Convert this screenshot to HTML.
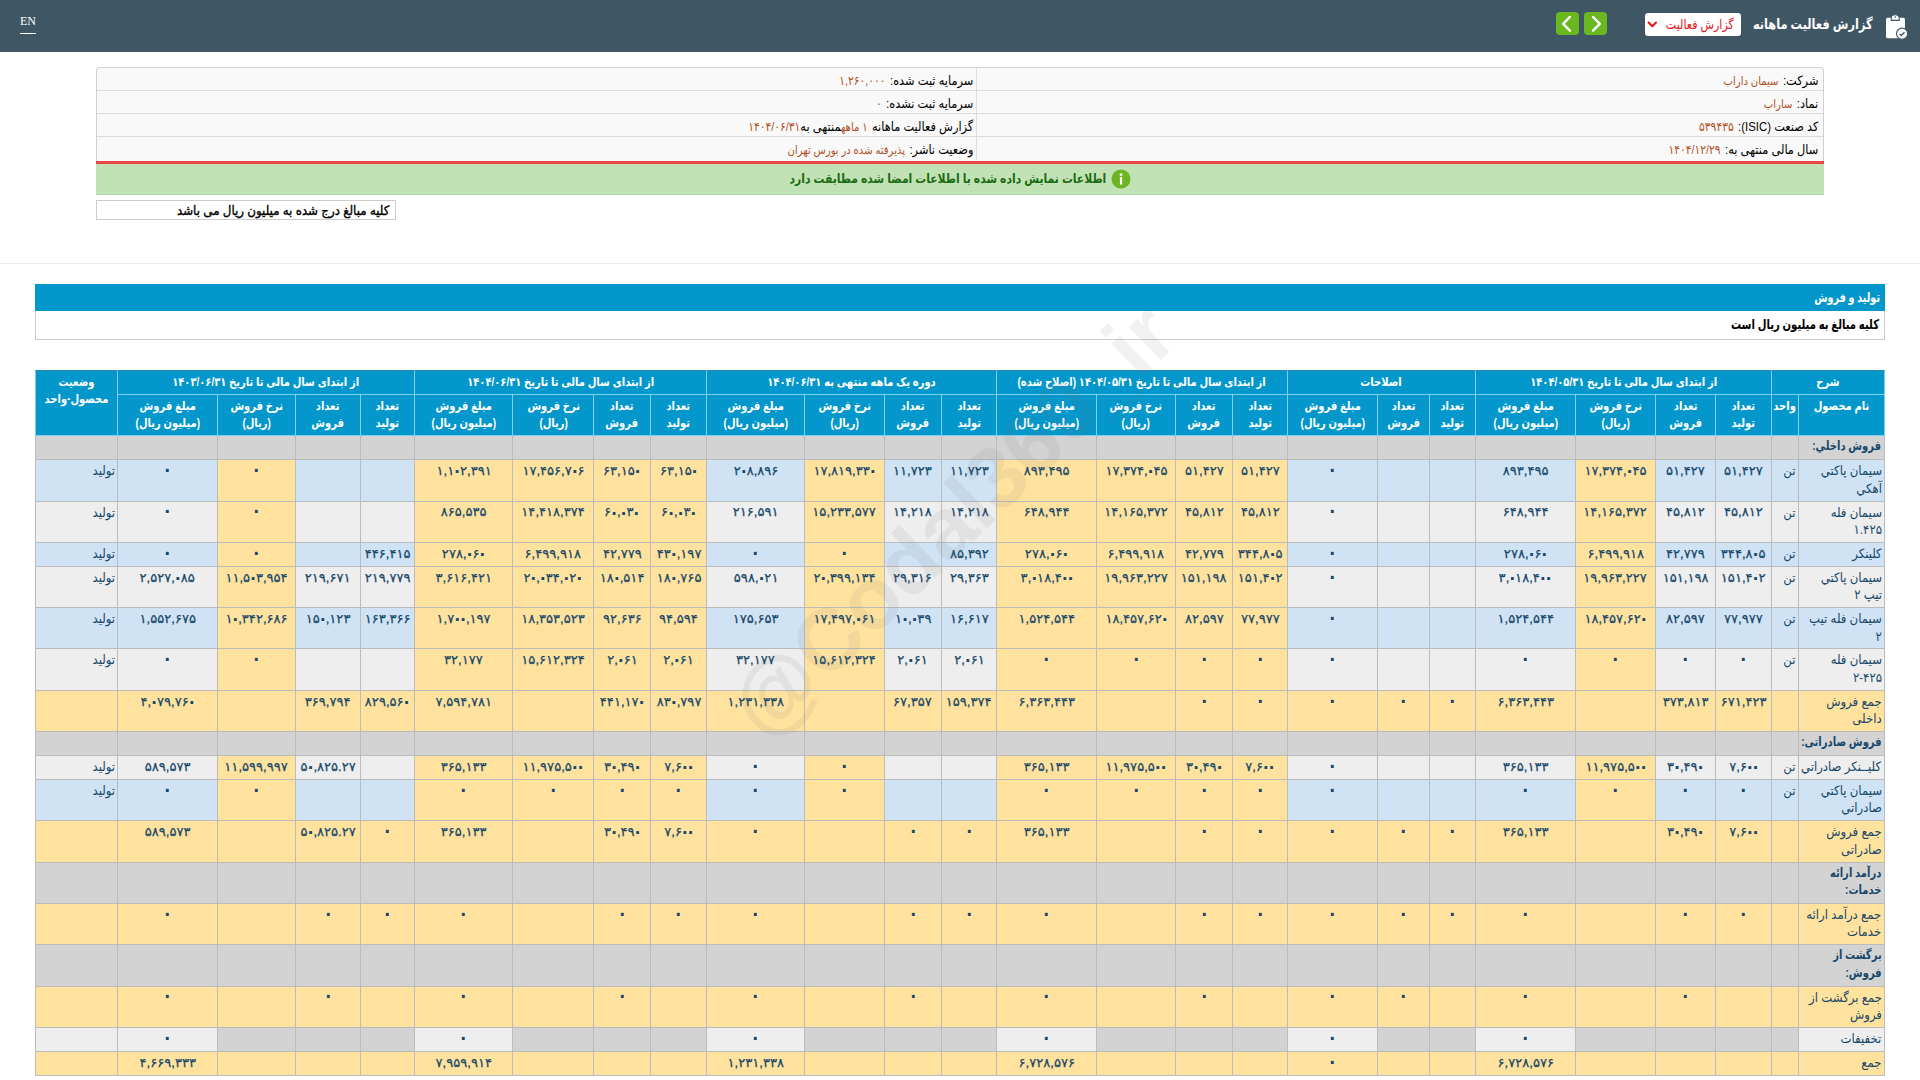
<!DOCTYPE html>
<html lang="fa">
<head>
<meta charset="utf-8">
<title>گزارش فعالیت ماهانه</title>
<style>
html,body{margin:0;padding:0;}
body{width:1920px;height:1080px;overflow:hidden;background:#fff;position:relative;
 font-family:"Liberation Sans","DejaVu Sans",sans-serif;font-size:12px;color:#000;}
.abs{position:absolute;}
/* top bar */
#top{left:0;top:0;width:1920px;height:52px;background:#3f5765;}
#en{left:20px;top:14px;color:#fff;font-family:"Liberation Serif",serif;font-size:12px;line-height:14px;border-bottom:1px solid #fff;padding-bottom:5px;}
#title{right:47px;top:13px;color:#fff;font-weight:bold;font-size:14px;line-height:22px;white-space:nowrap;direction:rtl;transform:scaleX(.811);transform-origin:100% 50%;}
#sel{left:1645px;top:13px;width:96px;height:23px;background:#fff;border-radius:3px;direction:rtl;}
#sel span{position:absolute;right:7px;top:0;line-height:24px;color:#e5141b;font-size:13px;white-space:nowrap;transform:scaleX(.852);transform-origin:100% 50%;}
.gbtn{top:12px;width:23px;height:23px;background:#6ab81f;border-radius:4px;}
/* info */
#info{left:96px;top:67px;width:1726px;height:93px;border:1px solid #d0d0d0;border-bottom:none;background:#f9f9f9;border-radius:4px 4px 0 0;}
.irow{position:absolute;left:0;width:1726px;height:22px;border-bottom:1px solid #dcdcdc;}
.icell{position:absolute;top:0;height:22px;line-height:26px;direction:rtl;white-space:nowrap;font-size:13px;transform:scaleX(.875);transform-origin:100% 50%;}
.icell b{font-weight:normal;color:#000;}
.icell i{font-style:normal;color:#b0501e;margin-right:5px;font-size:11.5px;}
.icell i.nu{font-size:12.3px;}
#red{left:96px;top:160.5px;width:1728px;height:3.5px;background:#e8474a;}
#green{left:96px;top:164px;width:1728px;height:30px;background:#c1e2b4;border-bottom:1px solid #b9d9ac;}
#gtext{right:814px;top:170px;color:#1b6b13;font-weight:bold;font-size:13px;line-height:18px;direction:rtl;white-space:nowrap;transform:scaleX(.831);transform-origin:100% 50%;}
#note{left:96px;top:200px;width:298px;height:18px;border:1px solid #ccc;direction:rtl;}
#note span{position:absolute;right:6px;top:0;line-height:20px;font-size:13px;white-space:nowrap;transform:scaleX(.91);transform-origin:100% 50%;-webkit-text-stroke:0.35px #000;}
#hr{left:0;top:263px;width:1920px;height:1px;background:#eaeaea;}
#sec{left:35px;top:284px;width:1850px;height:27px;background:#0497cb;}
#sec span{position:absolute;right:5px;top:0;line-height:27px;color:#fff;font-weight:bold;font-size:13.5px;direction:rtl;white-space:nowrap;transform:scaleX(.716);transform-origin:100% 50%;}
#sub{left:35px;top:311px;width:1848px;height:28px;border:1px solid #ccc;border-top:none;background:#fff;}
#sub span{position:absolute;right:5px;top:0;line-height:28px;font-weight:bold;font-size:13.5px;direction:rtl;white-space:nowrap;transform:scaleX(.744);transform-origin:100% 50%;}
/* table */
#tw{left:35px;top:370px;width:1850px;}
table.t{border-collapse:separate;border-spacing:0;table-layout:fixed;width:1849.5px;direction:rtl;}
table.t th,table.t td{box-sizing:border-box;padding:2px 2px 0 2px;vertical-align:top;overflow:visible;white-space:nowrap;
 border-left:1px solid #bbbbbb;border-bottom:1px solid #bbbbbb;line-height:17.4px;font-size:12.4px;text-align:center;color:#17486b;}
table.t th{background:#0497cb;color:#fff;font-weight:bold;padding-top:3px;border-left:1px solid #7fd0f0;border-bottom:1px solid #7fd0f0;font-size:12px;}
table.t tr.h1 th{height:25px;border-top:1px solid #2f86ae;}
table.t tr.h2 th{height:41.31px;}
table.t tr.r1 td{height:24px;}
table.t tr.r2 td{height:41.31px;}
table.t td:first-child,table.t th:first-child{border-right:1px solid #bbbbbb;}
table.t th:first-child{border-right:1px solid #7fd0f0;}
td.n{text-align:right !important;}
td.s,td.u{text-align:right !important;}
td.gb{font-weight:bold;}
.x{display:inline-block;transform:scaleX(.9);transform-origin:50% 50%;margin:0 -8px;font-size:13px;}
.xb{display:inline-block;transform:scaleX(.83);transform-origin:50% 50%;margin:0 -8px;}
.xr{transform-origin:100% 50%;margin:0;}
td.gb .xb{font-size:12.5px;transform:scaleX(.8);}
.nm{display:inline-block;transform:scaleX(1.055);margin:0 -8px;position:relative;top:.8px;-webkit-text-stroke:.25px #17486b;}
.b{background:#d0e3f5;}
.g{background:#eeeeee;}
.y{background:#ffe29d;}
.d{background:#d3d3d3;}
.nm.z{transform:translateY(-1px) scale(2.1);transform-origin:50% 46%;-webkit-text-stroke:0;}
.nm i{font-style:normal;font-size:24px;line-height:0;position:relative;top:3.2px;margin:0 -3.7px;-webkit-text-stroke:0;}
#wm{left:952px;top:520px;width:0;height:0;}
#wm span{position:absolute;left:-300px;top:-50px;width:600px;height:100px;line-height:100px;text-align:center;font-family:"Liberation Sans",sans-serif;font-weight:bold;font-size:87px;color:rgba(120,120,120,0.10);transform:rotate(-44deg);white-space:nowrap;}
</style>
</head>
<body>
<div id="top" class="abs"></div>
<div id="en" class="abs">EN</div>
<div id="title" class="abs">گزارش فعالیت ماهانه</div>
<svg class="abs" style="left:1884px;top:13px" width="28" height="28" viewBox="0 0 28 28">
 <rect x="2" y="4.8" width="19" height="20.5" rx="1.6" fill="#fff"/>
 <path d="M7.3 7.4V4.6a3.95 2.9 0 0 1 7.9 0v2.8z" fill="#fff" stroke="#3f5765" stroke-width="1.1"/>
 <circle cx="11.25" cy="4.1" r="0.8" fill="#3f5765"/>
 <circle cx="18.1" cy="20.7" r="5.6" fill="#fff" stroke="#3f5765" stroke-width="1.2"/>
 <path d="M15.6 20.9l1.7 1.6 3.2-3.3" fill="none" stroke="#3f5765" stroke-width="1.4"/>
</svg>
<div id="sel" class="abs"><span>گزارش فعالیت</span>
 <svg style="position:absolute;left:2px;top:8px" width="11" height="8" viewBox="0 0 11 8"><path d="M1.6 1.6l3.7 3.6 3.7-3.6" fill="none" stroke="#e5141b" stroke-width="2.1" stroke-linecap="round" stroke-linejoin="round"/></svg>
</div>
<div class="abs gbtn" style="left:1584px"><svg width="23" height="23" viewBox="0 0 23 23"><path d="M9 4.95l6.8 6.85-6.8 6.85" fill="none" stroke="#fff" stroke-width="2.4" stroke-linecap="round" stroke-linejoin="round"/></svg></div>
<div class="abs gbtn" style="left:1556px"><svg width="23" height="23" viewBox="0 0 23 23"><path d="M13.9 4.95l-6.8 6.85 6.8 6.85" fill="none" stroke="#fff" stroke-width="2.4" stroke-linecap="round" stroke-linejoin="round"/></svg></div>

<div id="info" class="abs">
 <div class="irow" style="top:0"><div class="icell" style="right:5px"><b>شرکت:</b><i>سیمان داراب</i></div><div class="icell" style="right:850px"><b>سرمایه ثبت شده:</b><i class="nu">۱,۲۶۰,۰۰۰</i></div></div>
 <div class="irow" style="top:23px"><div class="icell" style="right:5px"><b>نماد:</b><i>ساراب</i></div><div class="icell" style="right:850px"><b>سرمایه ثبت نشده:</b><i class="nu">۰</i></div></div>
 <div class="irow" style="top:46px"><div class="icell" style="right:5px"><b>کد صنعت (ISIC):</b><i class="nu">۵۳۹۴۳۵</i></div><div class="icell" style="right:850px"><b>گزارش فعالیت ماهانه</b><i>۱ ماهه</i><b>منتهی به</b><i class="nu" style="margin:0">۱۴۰۴/۰۶/۳۱</i></div></div>
 <div class="irow" style="top:69px;border-bottom:none"><div class="icell" style="right:5px"><b>سال مالی منتهی به:</b><i class="nu">۱۴۰۴/۱۲/۲۹</i></div><div class="icell" style="right:850px"><b>وضعیت ناشر:</b><i>پذیرفته شده در بورس تهران</i></div></div>
</div>
<div class="abs" style="left:976px;top:68px;width:1px;height:92px;background:#dcdcdc"></div>
<div id="red" class="abs"></div>
<div id="green" class="abs"></div>
<div id="gtext" class="abs">اطلاعات نمایش داده شده با اطلاعات امضا شده مطابقت دارد</div>
<svg class="abs" style="left:1111px;top:169px" width="20" height="20" viewBox="0 0 20 20"><circle cx="10" cy="10" r="9.5" fill="#6db423"/><circle cx="10" cy="5.6" r="1.4" fill="#fff"/><rect x="8.9" y="8" width="2.2" height="7.5" rx="0.6" fill="#fff"/></svg>
<div id="note" class="abs"><span>کلیه مبالغ درج شده به میلیون ریال می باشد</span></div>
<div id="hr" class="abs"></div>
<div id="sec" class="abs"><span>تولید و فروش</span></div>
<div id="sub" class="abs"><span>کلیه مبالغ به میلیون ریال است</span></div>
<div id="tw" class="abs">
<table class="t" dir="rtl"><colgroup>
<col style="width:86.5px">
<col style="width:27px">
<col style="width:56px">
<col style="width:60px">
<col style="width:80px">
<col style="width:100px">
<col style="width:46px">
<col style="width:52px">
<col style="width:90.3px">
<col style="width:54.4px">
<col style="width:57.3px">
<col style="width:79px">
<col style="width:99.8px">
<col style="width:55.2px">
<col style="width:57.3px">
<col style="width:79.7px">
<col style="width:97.7px">
<col style="width:56.3px">
<col style="width:57px">
<col style="width:80.7px">
<col style="width:98.3px">
<col style="width:54px">
<col style="width:65px">
<col style="width:78px">
<col style="width:100px">
<col style="width:82px">
</colgroup>
<tr class="h1"><th colspan="2"><span class="xb">شرح</span></th><th colspan="4"><span class="xb">از ابتدای سال مالی تا تاریخ ۱۴۰۴/۰۵/۳۱</span></th><th colspan="3"><span class="xb">اصلاحات</span></th><th colspan="4"><span class="xb">از ابتدای سال مالی تا تاریخ ۱۴۰۴/۰۵/۳۱ (اصلاح شده)</span></th><th colspan="4"><span class="xb">دوره یک ماهه منتهی به ۱۴۰۴/۰۶/۳۱</span></th><th colspan="4"><span class="xb">از ابتدای سال مالی تا تاریخ ۱۴۰۴/۰۶/۳۱</span></th><th colspan="4"><span class="xb">از ابتدای سال مالی تا تاریخ ۱۴۰۳/۰۶/۳۱</span></th><th rowspan="2"><span class="xb">وضعیت<br>محصول-واحد</span></th></tr>
<tr class="h2"><th><span class="xb">نام محصول</span></th><th><span class="xb">واحد</span></th><th><span class="xb">تعداد<br>تولید</span></th><th><span class="xb">تعداد<br>فروش</span></th><th><span class="xb">نرخ فروش<br>(ریال)</span></th><th><span class="xb">مبلغ فروش<br>(میلیون ریال)</span></th><th><span class="xb">تعداد<br>تولید</span></th><th><span class="xb">تعداد<br>فروش</span></th><th><span class="xb">مبلغ فروش<br>(میلیون ریال)</span></th><th><span class="xb">تعداد<br>تولید</span></th><th><span class="xb">تعداد<br>فروش</span></th><th><span class="xb">نرخ فروش<br>(ریال)</span></th><th><span class="xb">مبلغ فروش<br>(میلیون ریال)</span></th><th><span class="xb">تعداد<br>تولید</span></th><th><span class="xb">تعداد<br>فروش</span></th><th><span class="xb">نرخ فروش<br>(ریال)</span></th><th><span class="xb">مبلغ فروش<br>(میلیون ریال)</span></th><th><span class="xb">تعداد<br>تولید</span></th><th><span class="xb">تعداد<br>فروش</span></th><th><span class="xb">نرخ فروش<br>(ریال)</span></th><th><span class="xb">مبلغ فروش<br>(میلیون ریال)</span></th><th><span class="xb">تعداد<br>تولید</span></th><th><span class="xb">تعداد<br>فروش</span></th><th><span class="xb">نرخ فروش<br>(ریال)</span></th><th><span class="xb">مبلغ فروش<br>(میلیون ریال)</span></th></tr>
<tr class="r1"><td class="n d gb"><span class="xb xr">فروش داخلي:</span></td><td class="u d"></td><td class="d"></td><td class="d"></td><td class="d"></td><td class="d"></td><td class="d"></td><td class="d"></td><td class="d"></td><td class="d"></td><td class="d"></td><td class="d"></td><td class="d"></td><td class="d"></td><td class="d"></td><td class="d"></td><td class="d"></td><td class="d"></td><td class="d"></td><td class="d"></td><td class="d"></td><td class="d"></td><td class="d"></td><td class="d"></td><td class="d"></td><td class="s d"></td></tr>
<tr class="r2"><td class="n b"><span class="x xr">سيمان پاكتي<br>آهكي</span></td><td class="u b"><span class="x xr">تن</span></td><td class="b"><span class="nm">۵۱,۴۲۷</span></td><td class="b"><span class="nm">۵۱,۴۲۷</span></td><td class="y"><span class="nm">۱۷,۳۷۴,<i>۰</i>۴۵</span></td><td class="b"><span class="nm">۸۹۳,۴۹۵</span></td><td class="b"></td><td class="b"></td><td class="b"><span class="nm z">۰</span></td><td class="y"><span class="nm">۵۱,۴۲۷</span></td><td class="y"><span class="nm">۵۱,۴۲۷</span></td><td class="y"><span class="nm">۱۷,۳۷۴,<i>۰</i>۴۵</span></td><td class="y"><span class="nm">۸۹۳,۴۹۵</span></td><td class="b"><span class="nm">۱۱,۷۲۳</span></td><td class="b"><span class="nm">۱۱,۷۲۳</span></td><td class="y"><span class="nm">۱۷,۸۱۹,۳۳<i>۰</i></span></td><td class="b"><span class="nm">۲<i>۰</i>۸,۸۹۶</span></td><td class="y"><span class="nm">۶۳,۱۵<i>۰</i></span></td><td class="y"><span class="nm">۶۳,۱۵<i>۰</i></span></td><td class="y"><span class="nm">۱۷,۴۵۶,۷<i>۰</i>۶</span></td><td class="y"><span class="nm">۱,۱<i>۰</i>۲,۳۹۱</span></td><td class="b"></td><td class="b"></td><td class="y"><span class="nm z">۰</span></td><td class="b"><span class="nm z">۰</span></td><td class="s b"><span class="x xr">تولید</span></td></tr>
<tr class="r2"><td class="n g"><span class="x xr">سيمان فله<br>۱.۴۲۵</span></td><td class="u g"><span class="x xr">تن</span></td><td class="g"><span class="nm">۴۵,۸۱۲</span></td><td class="g"><span class="nm">۴۵,۸۱۲</span></td><td class="y"><span class="nm">۱۴,۱۶۵,۳۷۲</span></td><td class="g"><span class="nm">۶۴۸,۹۴۴</span></td><td class="g"></td><td class="g"></td><td class="g"><span class="nm z">۰</span></td><td class="y"><span class="nm">۴۵,۸۱۲</span></td><td class="y"><span class="nm">۴۵,۸۱۲</span></td><td class="y"><span class="nm">۱۴,۱۶۵,۳۷۲</span></td><td class="y"><span class="nm">۶۴۸,۹۴۴</span></td><td class="g"><span class="nm">۱۴,۲۱۸</span></td><td class="g"><span class="nm">۱۴,۲۱۸</span></td><td class="y"><span class="nm">۱۵,۲۳۳,۵۷۷</span></td><td class="g"><span class="nm">۲۱۶,۵۹۱</span></td><td class="y"><span class="nm">۶<i>۰</i>,<i>۰</i>۳<i>۰</i></span></td><td class="y"><span class="nm">۶<i>۰</i>,<i>۰</i>۳<i>۰</i></span></td><td class="y"><span class="nm">۱۴,۴۱۸,۳۷۴</span></td><td class="y"><span class="nm">۸۶۵,۵۳۵</span></td><td class="g"></td><td class="g"></td><td class="y"><span class="nm z">۰</span></td><td class="g"><span class="nm z">۰</span></td><td class="s g"><span class="x xr">تولید</span></td></tr>
<tr class="r1"><td class="n b"><span class="x xr">كلينكر</span></td><td class="u b"><span class="x xr">تن</span></td><td class="b"><span class="nm">۳۴۴,۸<i>۰</i>۵</span></td><td class="b"><span class="nm">۴۲,۷۷۹</span></td><td class="y"><span class="nm">۶,۴۹۹,۹۱۸</span></td><td class="b"><span class="nm">۲۷۸,<i>۰</i>۶<i>۰</i></span></td><td class="b"></td><td class="b"></td><td class="b"><span class="nm z">۰</span></td><td class="y"><span class="nm">۳۴۴,۸<i>۰</i>۵</span></td><td class="y"><span class="nm">۴۲,۷۷۹</span></td><td class="y"><span class="nm">۶,۴۹۹,۹۱۸</span></td><td class="y"><span class="nm">۲۷۸,<i>۰</i>۶<i>۰</i></span></td><td class="b"><span class="nm">۸۵,۳۹۲</span></td><td class="b"></td><td class="y"><span class="nm z">۰</span></td><td class="b"><span class="nm z">۰</span></td><td class="y"><span class="nm">۴۳<i>۰</i>,۱۹۷</span></td><td class="y"><span class="nm">۴۲,۷۷۹</span></td><td class="y"><span class="nm">۶,۴۹۹,۹۱۸</span></td><td class="y"><span class="nm">۲۷۸,<i>۰</i>۶<i>۰</i></span></td><td class="b"><span class="nm">۴۴۶,۴۱۵</span></td><td class="b"></td><td class="y"><span class="nm z">۰</span></td><td class="b"><span class="nm z">۰</span></td><td class="s b"><span class="x xr">تولید</span></td></tr>
<tr class="r2"><td class="n g"><span class="x xr">سيمان پاكتي<br>تيپ ۲</span></td><td class="u g"><span class="x xr">تن</span></td><td class="g"><span class="nm">۱۵۱,۴<i>۰</i>۲</span></td><td class="g"><span class="nm">۱۵۱,۱۹۸</span></td><td class="y"><span class="nm">۱۹,۹۶۳,۲۲۷</span></td><td class="g"><span class="nm">۳,<i>۰</i>۱۸,۴<i>۰</i><i>۰</i></span></td><td class="g"></td><td class="g"></td><td class="g"><span class="nm z">۰</span></td><td class="y"><span class="nm">۱۵۱,۴<i>۰</i>۲</span></td><td class="y"><span class="nm">۱۵۱,۱۹۸</span></td><td class="y"><span class="nm">۱۹,۹۶۳,۲۲۷</span></td><td class="y"><span class="nm">۳,<i>۰</i>۱۸,۴<i>۰</i><i>۰</i></span></td><td class="g"><span class="nm">۲۹,۳۶۳</span></td><td class="g"><span class="nm">۲۹,۳۱۶</span></td><td class="y"><span class="nm">۲<i>۰</i>,۳۹۹,۱۳۴</span></td><td class="g"><span class="nm">۵۹۸,<i>۰</i>۲۱</span></td><td class="y"><span class="nm">۱۸<i>۰</i>,۷۶۵</span></td><td class="y"><span class="nm">۱۸<i>۰</i>,۵۱۴</span></td><td class="y"><span class="nm">۲<i>۰</i>,<i>۰</i>۳۴,<i>۰</i>۲<i>۰</i></span></td><td class="y"><span class="nm">۳,۶۱۶,۴۲۱</span></td><td class="g"><span class="nm">۲۱۹,۷۷۹</span></td><td class="g"><span class="nm">۲۱۹,۶۷۱</span></td><td class="y"><span class="nm">۱۱,۵<i>۰</i>۳,۹۵۴</span></td><td class="g"><span class="nm">۲,۵۲۷,<i>۰</i>۸۵</span></td><td class="s g"><span class="x xr">تولید</span></td></tr>
<tr class="r2"><td class="n b"><span class="x xr">سيمان فله تيپ<br>۲</span></td><td class="u b"><span class="x xr">تن</span></td><td class="b"><span class="nm">۷۷,۹۷۷</span></td><td class="b"><span class="nm">۸۲,۵۹۷</span></td><td class="y"><span class="nm">۱۸,۴۵۷,۶۲<i>۰</i></span></td><td class="b"><span class="nm">۱,۵۲۴,۵۴۴</span></td><td class="b"></td><td class="b"></td><td class="b"><span class="nm z">۰</span></td><td class="y"><span class="nm">۷۷,۹۷۷</span></td><td class="y"><span class="nm">۸۲,۵۹۷</span></td><td class="y"><span class="nm">۱۸,۴۵۷,۶۲<i>۰</i></span></td><td class="y"><span class="nm">۱,۵۲۴,۵۴۴</span></td><td class="b"><span class="nm">۱۶,۶۱۷</span></td><td class="b"><span class="nm">۱<i>۰</i>,<i>۰</i>۳۹</span></td><td class="y"><span class="nm">۱۷,۴۹۷,<i>۰</i>۶۱</span></td><td class="b"><span class="nm">۱۷۵,۶۵۳</span></td><td class="y"><span class="nm">۹۴,۵۹۴</span></td><td class="y"><span class="nm">۹۲,۶۳۶</span></td><td class="y"><span class="nm">۱۸,۳۵۳,۵۲۳</span></td><td class="y"><span class="nm">۱,۷<i>۰</i><i>۰</i>,۱۹۷</span></td><td class="b"><span class="nm">۱۶۳,۳۶۶</span></td><td class="b"><span class="nm">۱۵<i>۰</i>,۱۲۳</span></td><td class="y"><span class="nm">۱<i>۰</i>,۳۴۲,۶۸۶</span></td><td class="b"><span class="nm">۱,۵۵۲,۶۷۵</span></td><td class="s b"><span class="x xr">تولید</span></td></tr>
<tr class="r2"><td class="n g"><span class="x xr">سيمان فله<br>۲-۴۲۵</span></td><td class="u g"><span class="x xr">تن</span></td><td class="g"><span class="nm z">۰</span></td><td class="g"><span class="nm z">۰</span></td><td class="y"><span class="nm z">۰</span></td><td class="g"><span class="nm z">۰</span></td><td class="g"></td><td class="g"></td><td class="g"><span class="nm z">۰</span></td><td class="y"><span class="nm z">۰</span></td><td class="y"><span class="nm z">۰</span></td><td class="y"><span class="nm z">۰</span></td><td class="y"><span class="nm z">۰</span></td><td class="g"><span class="nm">۲,<i>۰</i>۶۱</span></td><td class="g"><span class="nm">۲,<i>۰</i>۶۱</span></td><td class="y"><span class="nm">۱۵,۶۱۲,۳۲۴</span></td><td class="g"><span class="nm">۳۲,۱۷۷</span></td><td class="y"><span class="nm">۲,<i>۰</i>۶۱</span></td><td class="y"><span class="nm">۲,<i>۰</i>۶۱</span></td><td class="y"><span class="nm">۱۵,۶۱۲,۳۲۴</span></td><td class="y"><span class="nm">۳۲,۱۷۷</span></td><td class="g"></td><td class="g"></td><td class="y"><span class="nm z">۰</span></td><td class="g"><span class="nm z">۰</span></td><td class="s g"><span class="x xr">تولید</span></td></tr>
<tr class="r2"><td class="n y"><span class="x xr">جمع فروش<br>داخلی</span></td><td class="u y"></td><td class="y"><span class="nm">۶۷۱,۴۲۳</span></td><td class="y"><span class="nm">۳۷۳,۸۱۳</span></td><td class="y"></td><td class="y"><span class="nm">۶,۳۶۳,۴۴۳</span></td><td class="y"><span class="nm z">۰</span></td><td class="y"><span class="nm z">۰</span></td><td class="y"><span class="nm z">۰</span></td><td class="y"><span class="nm z">۰</span></td><td class="y"><span class="nm z">۰</span></td><td class="y"></td><td class="y"><span class="nm">۶,۳۶۳,۴۴۳</span></td><td class="y"><span class="nm">۱۵۹,۳۷۴</span></td><td class="y"><span class="nm">۶۷,۳۵۷</span></td><td class="y"></td><td class="y"><span class="nm">۱,۲۳۱,۳۳۸</span></td><td class="y"><span class="nm">۸۳<i>۰</i>,۷۹۷</span></td><td class="y"><span class="nm">۴۴۱,۱۷<i>۰</i></span></td><td class="y"></td><td class="y"><span class="nm">۷,۵۹۴,۷۸۱</span></td><td class="y"><span class="nm">۸۲۹,۵۶<i>۰</i></span></td><td class="y"><span class="nm">۳۶۹,۷۹۴</span></td><td class="y"></td><td class="y"><span class="nm">۴,<i>۰</i>۷۹,۷۶<i>۰</i></span></td><td class="s y"></td></tr>
<tr class="r1"><td class="n d gb"><span class="xb xr">فروش صادراتی:</span></td><td class="u d"></td><td class="d"></td><td class="d"></td><td class="d"></td><td class="d"></td><td class="d"></td><td class="d"></td><td class="d"></td><td class="d"></td><td class="d"></td><td class="d"></td><td class="d"></td><td class="d"></td><td class="d"></td><td class="d"></td><td class="d"></td><td class="d"></td><td class="d"></td><td class="d"></td><td class="d"></td><td class="d"></td><td class="d"></td><td class="d"></td><td class="d"></td><td class="s d"></td></tr>
<tr class="r1"><td class="n g"><span class="x xr">كليــنكر صادراتي</span></td><td class="u g"><span class="x xr">تن</span></td><td class="g"><span class="nm">۷,۶<i>۰</i><i>۰</i></span></td><td class="g"><span class="nm">۳<i>۰</i>,۴۹<i>۰</i></span></td><td class="y"><span class="nm">۱۱,۹۷۵,۵<i>۰</i><i>۰</i></span></td><td class="g"><span class="nm">۳۶۵,۱۳۳</span></td><td class="g"></td><td class="g"></td><td class="g"><span class="nm z">۰</span></td><td class="y"><span class="nm">۷,۶<i>۰</i><i>۰</i></span></td><td class="y"><span class="nm">۳<i>۰</i>,۴۹<i>۰</i></span></td><td class="y"><span class="nm">۱۱,۹۷۵,۵<i>۰</i><i>۰</i></span></td><td class="y"><span class="nm">۳۶۵,۱۳۳</span></td><td class="g"></td><td class="g"></td><td class="y"><span class="nm z">۰</span></td><td class="g"><span class="nm z">۰</span></td><td class="y"><span class="nm">۷,۶<i>۰</i><i>۰</i></span></td><td class="y"><span class="nm">۳<i>۰</i>,۴۹<i>۰</i></span></td><td class="y"><span class="nm">۱۱,۹۷۵,۵<i>۰</i><i>۰</i></span></td><td class="y"><span class="nm">۳۶۵,۱۳۳</span></td><td class="g"></td><td class="g"><span class="nm">۵<i>۰</i>,۸۲۵.۲۷</span></td><td class="y"><span class="nm">۱۱,۵۹۹,۹۹۷</span></td><td class="g"><span class="nm">۵۸۹,۵۷۳</span></td><td class="s g"><span class="x xr">تولید</span></td></tr>
<tr class="r2"><td class="n b"><span class="x xr">سيمان پاكتي<br>صادراتي</span></td><td class="u b"><span class="x xr">تن</span></td><td class="b"><span class="nm z">۰</span></td><td class="b"><span class="nm z">۰</span></td><td class="y"><span class="nm z">۰</span></td><td class="b"><span class="nm z">۰</span></td><td class="b"></td><td class="b"></td><td class="b"><span class="nm z">۰</span></td><td class="y"><span class="nm z">۰</span></td><td class="y"><span class="nm z">۰</span></td><td class="y"><span class="nm z">۰</span></td><td class="y"><span class="nm z">۰</span></td><td class="b"></td><td class="b"></td><td class="y"><span class="nm z">۰</span></td><td class="b"><span class="nm z">۰</span></td><td class="y"><span class="nm z">۰</span></td><td class="y"><span class="nm z">۰</span></td><td class="y"><span class="nm z">۰</span></td><td class="y"><span class="nm z">۰</span></td><td class="b"></td><td class="b"></td><td class="y"><span class="nm z">۰</span></td><td class="b"><span class="nm z">۰</span></td><td class="s b"><span class="x xr">تولید</span></td></tr>
<tr class="r2"><td class="n y"><span class="x xr">جمع فروش<br>صادراتی</span></td><td class="u y"></td><td class="y"><span class="nm">۷,۶<i>۰</i><i>۰</i></span></td><td class="y"><span class="nm">۳<i>۰</i>,۴۹<i>۰</i></span></td><td class="y"></td><td class="y"><span class="nm">۳۶۵,۱۳۳</span></td><td class="y"><span class="nm z">۰</span></td><td class="y"><span class="nm z">۰</span></td><td class="y"><span class="nm z">۰</span></td><td class="y"><span class="nm z">۰</span></td><td class="y"><span class="nm z">۰</span></td><td class="y"></td><td class="y"><span class="nm">۳۶۵,۱۳۳</span></td><td class="y"><span class="nm z">۰</span></td><td class="y"><span class="nm z">۰</span></td><td class="y"></td><td class="y"><span class="nm z">۰</span></td><td class="y"><span class="nm">۷,۶<i>۰</i><i>۰</i></span></td><td class="y"><span class="nm">۳<i>۰</i>,۴۹<i>۰</i></span></td><td class="y"></td><td class="y"><span class="nm">۳۶۵,۱۳۳</span></td><td class="y"><span class="nm z">۰</span></td><td class="y"><span class="nm">۵<i>۰</i>,۸۲۵.۲۷</span></td><td class="y"></td><td class="y"><span class="nm">۵۸۹,۵۷۳</span></td><td class="s y"></td></tr>
<tr class="r2"><td class="n d gb"><span class="xb xr">درآمد ارائه<br>خدمات:</span></td><td class="u d"></td><td class="d"></td><td class="d"></td><td class="d"></td><td class="d"></td><td class="d"></td><td class="d"></td><td class="d"></td><td class="d"></td><td class="d"></td><td class="d"></td><td class="d"></td><td class="d"></td><td class="d"></td><td class="d"></td><td class="d"></td><td class="d"></td><td class="d"></td><td class="d"></td><td class="d"></td><td class="d"></td><td class="d"></td><td class="d"></td><td class="d"></td><td class="s d"></td></tr>
<tr class="r2"><td class="n y"><span class="x xr">جمع درآمد ارائه<br>خدمات</span></td><td class="u y"></td><td class="y"><span class="nm z">۰</span></td><td class="y"><span class="nm z">۰</span></td><td class="y"></td><td class="y"><span class="nm z">۰</span></td><td class="y"><span class="nm z">۰</span></td><td class="y"><span class="nm z">۰</span></td><td class="y"><span class="nm z">۰</span></td><td class="y"><span class="nm z">۰</span></td><td class="y"><span class="nm z">۰</span></td><td class="y"></td><td class="y"><span class="nm z">۰</span></td><td class="y"><span class="nm z">۰</span></td><td class="y"><span class="nm z">۰</span></td><td class="y"></td><td class="y"><span class="nm z">۰</span></td><td class="y"><span class="nm z">۰</span></td><td class="y"><span class="nm z">۰</span></td><td class="y"></td><td class="y"><span class="nm z">۰</span></td><td class="y"><span class="nm z">۰</span></td><td class="y"><span class="nm z">۰</span></td><td class="y"></td><td class="y"><span class="nm z">۰</span></td><td class="s y"></td></tr>
<tr class="r2"><td class="n d gb"><span class="xb xr">برگشت از<br>فروش:</span></td><td class="u d"></td><td class="d"></td><td class="d"></td><td class="d"></td><td class="d"></td><td class="d"></td><td class="d"></td><td class="d"></td><td class="d"></td><td class="d"></td><td class="d"></td><td class="d"></td><td class="d"></td><td class="d"></td><td class="d"></td><td class="d"></td><td class="d"></td><td class="d"></td><td class="d"></td><td class="d"></td><td class="d"></td><td class="d"></td><td class="d"></td><td class="d"></td><td class="s d"></td></tr>
<tr class="r2"><td class="n y"><span class="x xr">جمع برگشت از<br>فروش</span></td><td class="u y"></td><td class="y"></td><td class="y"><span class="nm z">۰</span></td><td class="y"></td><td class="y"><span class="nm z">۰</span></td><td class="y"></td><td class="y"><span class="nm z">۰</span></td><td class="y"><span class="nm z">۰</span></td><td class="y"></td><td class="y"><span class="nm z">۰</span></td><td class="y"></td><td class="y"><span class="nm z">۰</span></td><td class="y"></td><td class="y"><span class="nm z">۰</span></td><td class="y"></td><td class="y"><span class="nm z">۰</span></td><td class="y"></td><td class="y"><span class="nm z">۰</span></td><td class="y"></td><td class="y"><span class="nm z">۰</span></td><td class="y"></td><td class="y"><span class="nm z">۰</span></td><td class="y"></td><td class="y"><span class="nm z">۰</span></td><td class="s y"></td></tr>
<tr class="r1"><td class="n g"><span class="x xr">تخفیفات</span></td><td class="u d"></td><td class="d"></td><td class="d"></td><td class="d"></td><td class="g"><span class="nm z">۰</span></td><td class="d"></td><td class="d"></td><td class="g"><span class="nm z">۰</span></td><td class="d"></td><td class="d"></td><td class="d"></td><td class="g"><span class="nm z">۰</span></td><td class="d"></td><td class="d"></td><td class="d"></td><td class="g"><span class="nm z">۰</span></td><td class="d"></td><td class="d"></td><td class="d"></td><td class="g"><span class="nm z">۰</span></td><td class="d"></td><td class="d"></td><td class="d"></td><td class="g"><span class="nm z">۰</span></td><td class="s g"></td></tr>
<tr class="r1"><td class="n y"><span class="x xr">جمع</span></td><td class="u y"></td><td class="y"></td><td class="y"></td><td class="y"></td><td class="y"><span class="nm">۶,۷۲۸,۵۷۶</span></td><td class="y"></td><td class="y"></td><td class="y"><span class="nm z">۰</span></td><td class="y"></td><td class="y"></td><td class="y"></td><td class="y"><span class="nm">۶,۷۲۸,۵۷۶</span></td><td class="y"></td><td class="y"></td><td class="y"></td><td class="y"><span class="nm">۱,۲۳۱,۳۳۸</span></td><td class="y"></td><td class="y"></td><td class="y"></td><td class="y"><span class="nm">۷,۹۵۹,۹۱۴</span></td><td class="y"></td><td class="y"></td><td class="y"></td><td class="y"><span class="nm">۴,۶۶۹,۳۳۳</span></td><td class="s y"></td></tr>
</table>
</div>
<div id="wm" class="abs"><span>@Codal360_ir</span></div>
</body>
</html>
